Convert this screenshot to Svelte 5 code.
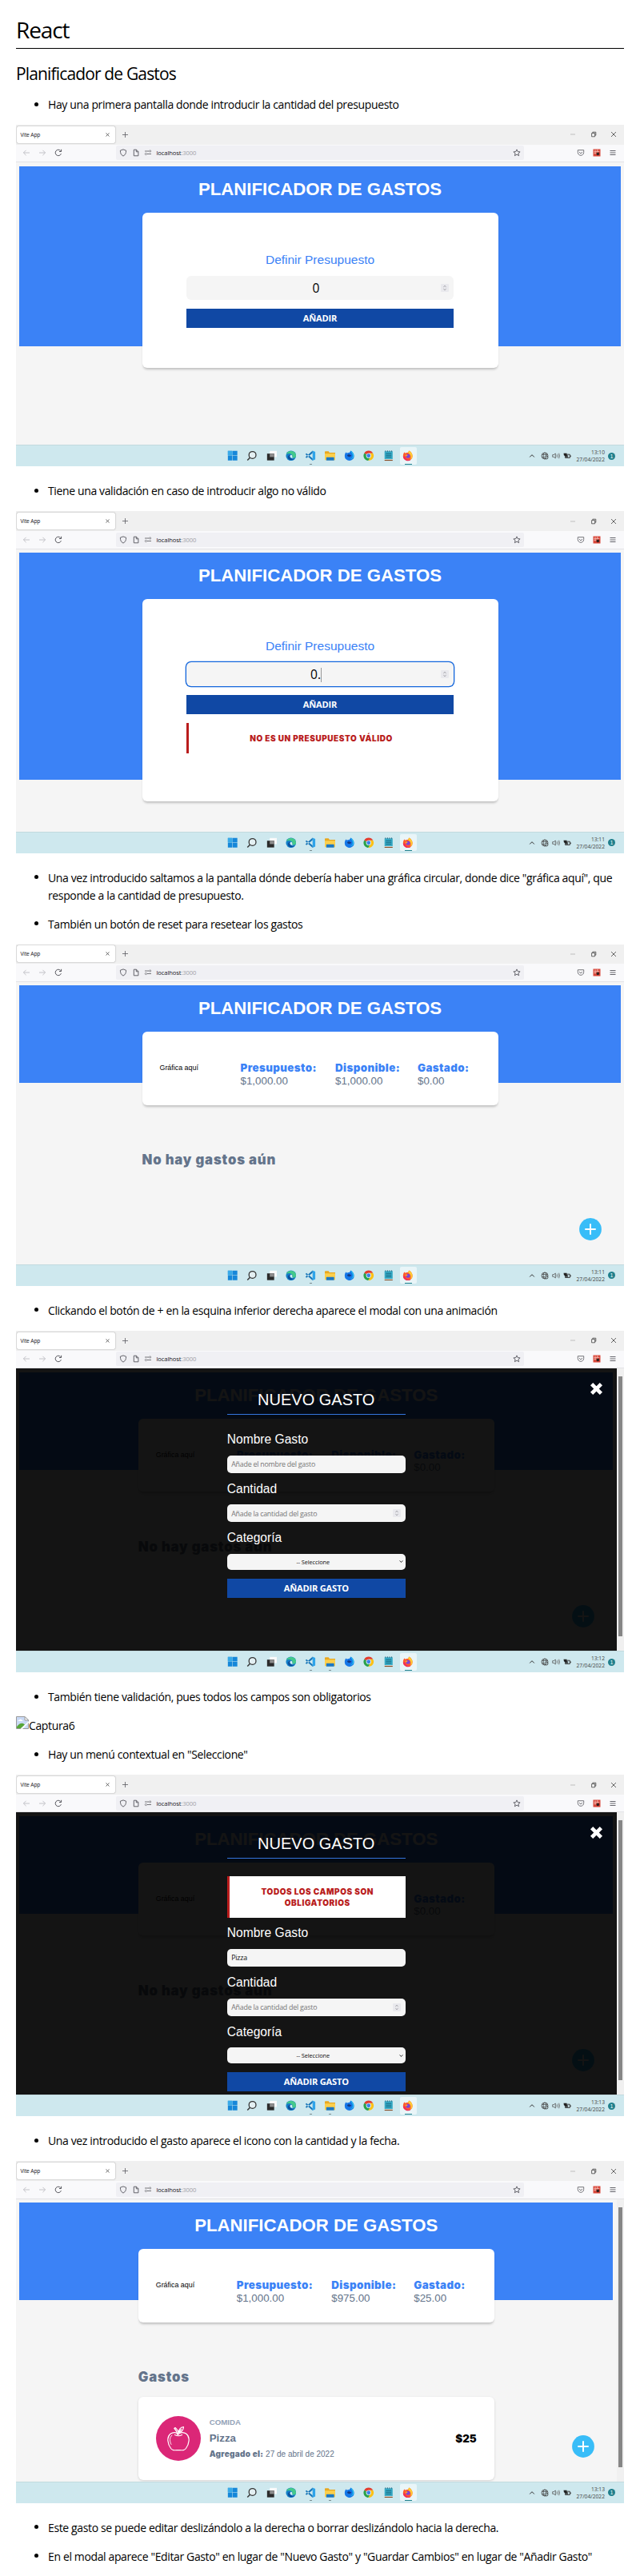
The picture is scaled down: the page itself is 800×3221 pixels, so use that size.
<script>
  const start = { kind: 'budget', time: '13:10', value: '0' };
  const invalid = { kind: 'budget', time: '13:11', value: '0.', focused: true, error: 'No es un presupuesto válido' };
  const empty = { kind: 'control', time: '13:11', available: '$1,000.00', spent: '$0.00' };
  const modal = { ...empty, time: '13:12', scroll: true, folder: true, modal: { name: '' } };
  const modalError = { ...empty, time: '13:13', scroll: true, folder: true, modal: { name: 'Pizza', error: 'Todos los campos son obligatorios' } };
  const list = { kind: 'control', time: '13:13', available: '$975.00', spent: '$25.00', scroll: true, folder: true, expense: true };

  const blocks = [
    { items: ['Hay una primera pantalla donde introducir la cantidad del presupuesto'], shot: start },
    { items: ['Tiene una validación en caso de introducir algo no válido'], shot: invalid },
    {
      items: [
        'Una vez introducido saltamos a la pantalla dónde debería haber una gráfica circular, donde dice "gráfica aquí", que responde a la cantidad de presupuesto.',
        'También un botón de reset para resetear los gastos'
      ],
      shot: empty
    },
    { items: ['Clickando el botón de + en la esquina inferior derecha aparece el modal con una animación'], shot: modal },
    { items: ['También tiene validación, pues todos los campos son obligatorios'], missing: 'Captura6' },
    { items: ['Hay un menú contextual en "Seleccione"'], shot: modalError },
    { items: ['Una vez introducido el gasto aparece el icono con la cantidad y la fecha.'], shot: list },
    {
      items: [
        'Este gasto se puede editar deslizándolo a la derecha o borrar deslizándolo hacia la derecha.',
        'En el modal aparece "Editar Gasto" en lugar de "Nuevo Gasto" y "Guardar Cambios" en lugar de "Añadir Gasto"'
      ]
    }
  ];
</script>

{#snippet stepper()}
  <svg class="stepper" viewBox="0 0 10 10"><rect width="10" height="10" rx="1" fill="#e9e9ed" /><path d="M3.4 3.8 5 2.3l1.6 1.5M3.4 6.2 5 7.7l1.6-1.5" fill="none" stroke="#8a8a92" stroke-width=".8" /></svg>
{/snippet}

{#snippet browserBars()}
  <div class="tabs">
    <div class="tab">
      <span>Vite App</span>
      <svg width="7" height="7" viewBox="0 0 7 7"><path d="M1.5 1.5l4 4M5.5 1.5l-4 4" stroke="#444" stroke-width=".8" /></svg>
    </div>
    <svg class="new" width="9" height="9" viewBox="0 0 9 9"><path d="M4.5 1v7M1 4.5h7" stroke="#5c5c62" stroke-width=".8" /></svg>
    <div class="window">
      <svg width="8" height="8" viewBox="0 0 8 8"><path d="M1 4h6" stroke="#ccc" stroke-width="1.4" /></svg>
      <svg width="8" height="8" viewBox="0 0 8 8"><path d="M1.6 2.6h4v4.2h-4zM2.8 2.4V1.2h4v4H5.8" fill="none" stroke="#444" stroke-width=".8" /></svg>
      <svg width="8" height="8" viewBox="0 0 8 8"><path d="M1 1l6 6M7 1L1 7" stroke="#444" stroke-width=".8" /></svg>
    </div>
  </div>
  <div class="tools">
    <div class="nav">
      <svg width="10" height="10" viewBox="0 0 10 10"><path d="M9 5H1.5M4.6 1.8 1.4 5l3.2 3.2" fill="none" stroke="#bcbcc2" stroke-width=".9" /></svg>
      <svg width="10" height="10" viewBox="0 0 10 10"><path d="M1 5h7.5M5.4 1.8 8.6 5 5.4 8.2" fill="none" stroke="#bcbcc2" stroke-width=".9" /></svg>
      <svg width="10" height="10" viewBox="0 0 10 10"><path d="M8.4 6.2A3.7 3.7 0 1 1 7.6 2.4M8.6.8v2.7H6" fill="none" stroke="#55555c" stroke-width="1" /></svg>
    </div>
    <div class="url">
      <svg width="10" height="10" viewBox="0 0 10 10"><path d="M5 .9 8.6 2.2c0 3.2-.7 5.4-3.6 6.9C2.1 7.6 1.4 5.4 1.4 2.2z" fill="none" stroke="#55555c" stroke-width=".9" /></svg>
      <svg width="10" height="10" viewBox="0 0 10 10"><path d="M2.3 1.2h3.2l2.4 2.4v5.2H2.3zM5.3 1.2v2.6h2.6" fill="none" stroke="#55555c" stroke-width=".9" /></svg>
      <svg width="10" height="10" viewBox="0 0 10 10"><path d="M1 3h5M4 6.5h5" stroke="#66666c" stroke-width=".9" /><circle cx="7.6" cy="3" r="1.1" fill="none" stroke="#66666c" stroke-width=".7" /><circle cx="2.4" cy="6.5" r="1.1" fill="none" stroke="#66666c" stroke-width=".7" /></svg>
      <span>localhost<i>:3000</i></span>
      <svg class="star" width="10" height="10" viewBox="0 0 10 10"><path d="M5 .9l1.2 2.7 2.9.3-2.2 1.9.7 2.9L5 7.2 2.4 8.7l.7-2.9L.9 3.9l2.9-.3z" fill="none" stroke="#55555c" stroke-width=".9" /></svg>
    </div>
    <div class="extras">
      <svg width="10" height="10" viewBox="0 0 10 10"><path d="M1.3 1.7h7.4v2.6C8.7 6.7 7 8.3 5 8.3S1.3 6.7 1.3 4.3zM3 4l2 2 2-2" fill="none" stroke="#66666c" stroke-width=".9" /></svg>
      <svg width="10" height="10" viewBox="0 0 10 10"><rect x=".5" y=".5" width="9" height="9" fill="#d8473a" /><path d="M1.5 3.4h6.8M1.5 5.4h3M3 1.4v5M5.8 1v4" stroke="#f3b5ad" stroke-width=".9" /><circle cx="6.3" cy="6.4" r="1.8" fill="#33201e" /></svg>
      <svg width="10" height="10" viewBox="0 0 10 10"><path d="M1.5 2.5h7M1.5 5h7M1.5 7.5h7" stroke="#55555c" stroke-width=".9" /></svg>
    </div>
  </div>
{/snippet}

{#snippet taskbar(shot)}
  <div class="taskbar">
    <div class="apps">
      <div class="app"><svg viewBox="0 0 16 16"><path d="M1 1h6.7v6.7H1zM8.3 1H15v6.7H8.3zM1 8.3h6.7V15H1zM8.3 8.3H15V15H8.3z" fill="#1687d9" /><path d="M1 1h6.7v6.7H1z" fill="#38a9e8" /></svg></div>
      <div class="app"><svg viewBox="0 0 16 16"><circle cx="9" cy="7" r="5.2" fill="#e3eff2" stroke="#333" stroke-width="1.5" /><path d="M5.3 11 1.5 14.8" stroke="#333" stroke-width="1.7" /></svg></div>
      <div class="app"><svg viewBox="0 0 16 16"><path d="M5 1h11v9H5z" fill="#fafafa" /><path d="M1 5h10.5v10H1z" fill="#2b2b2b" /><path d="M5 5h6.5v5H5z" fill="#8d8d8d" /></svg></div>
      <div class="app"><svg viewBox="0 0 16 16"><circle cx="8" cy="8" r="7.5" fill="#157fc9" /><path d="M1 6A7.5 7.5 0 0 1 15.5 8c0 3-2.5 3.6-4.7 3.2-1.5-.3-.6-1.2-.6-2.7C10 5.500 5 3.500 1 6z" fill="#45c98b" /><path d="M6 8.500c0 3.200 3.500 5 7 4C9 16.500 2 14 3.500 9 4 7.500 6 6.500 7.500 6.800 6.500 7.300 6 7.800 6 8.500z" fill="#0e4f9c" /><path d="M8 6.800c1.500.3 2.500 1.500 1.800 3.200-.4 1 .6 1.800 2.400 1.700-2.200.9-5.500-.2-5.600-2.700 0-1 .5-1.800 1.400-2.200z" fill="#d6eff3" /></svg></div>
      <div class="app"><svg viewBox="0 0 16 16"><path d="M11.500.5 15.500 2.500v11l-4 2z" fill="#2fa4ea" /><path d="M11.500 4 2.500 11.500 1 10.200 11.500.5zM11.500 12 2.500 4.500 1 5.800l10.500 9.700z" fill="#1674b8" /></svg><b class="dot"></b></div>
      <div class="app"><svg viewBox="0 0 16 16"><path d="M0 2.500Q0 1.500 1 1.500h4.500l1.500 2h8q1 0 1 1V14H0z" fill="#e9a820" /><path d="M0 5h16v9.500H0z" fill="#fccf4b" /><path d="M3 10.500h10q.8 0 .8.8V15H2.200v-3.700q0-.8.8-.8z" fill="#1c78c4" /></svg>{#if shot.folder}<b class="dot"></b>{/if}</div>
      <div class="app"><svg viewBox="0 0 16 16"><path d="M8 15.500A7 7 0 0 1 1 8.500C1 6 2 4 3 3l1.500 1.500C6 3.500 7 3.500 8 3.500L10 .5c3 2 5 4.500 5 8a7 7 0 0 1-7 7z" fill="#1577e8" /><path d="M10 .5c.5 3 3 4 3 7.500 0 3-2 5-5 5 6.500 1.500 9.500-7 2-12.500z" fill="#28c7ed" /><path d="M4.500 7.500 7 6l4 1.500a3.500 3.500 0 0 1-6.500 0z" fill="#113a86" /></svg></div>
      <div class="app"><svg viewBox="0 0 16 16"><path d="M8 8 1.500 4.300A7.500 7.500 0 0 1 14.500 4.300H8z" fill="#e33b2e" /><path d="M8 4.300h6.500A7.500 7.500 0 0 1 7.300 15.500L11 9.700 8 8z" fill="#fbc116" /><path d="M8 8 1.500 4.300A7.500 7.500 0 0 0 7.300 15.500L11 9.700z" fill="#2aa14b" /><circle cx="8" cy="8" r="3.700" fill="#fff" /><circle cx="8" cy="8" r="2.900" fill="#3d7fe8" /></svg></div>
      <div class="app"><svg viewBox="0 0 16 16"><path d="M2 1.500h12V13H2z" fill="#35aac6" /><path d="M4 5h8M4 7.500h8M4 10h8" stroke="#17627b" stroke-width="1" /><path d="M3.500.3v2M6.500.3v2M9.500.3v2M12.500.3v2" stroke="#25637a" stroke-width="1" /><path d="M2 13h12v.7H2z" fill="#fff" /><path d="M2 14h12v1.500H2z" fill="#8a4b22" /></svg></div>
      <div class="app active"><svg viewBox="0 0 16 16"><path d="M8 15.500A7 7 0 0 1 1 8.500C1 6 2 4 3 3l1.500 1.500C6 3.500 7 3.500 8 3.500L10 .5c3 2 5 4.500 5 8a7 7 0 0 1-7 7z" fill="#ff5a2d" /><path d="M10 .5c3 2 5 4.500 5 8a7 7 0 0 1-3 5.500C13.500 9 12 6 8 3.500z" fill="#ffc935" /><path d="M1 8.500a7 7 0 0 0 12 5c-4 1.500-8 .5-9-4z" fill="#f02c58" /><circle cx="8.300" cy="8.500" r="3" fill="#7a45d6" /><path d="M4 7c2-1 3 0 4 .5-1.500 1-2 1-2.500 2z" fill="#ffa22d" /></svg><b class="line"></b></div>
    </div>
    <div class="tray">
      <svg width="8" height="8" viewBox="0 0 8 8"><path d="M1.200 5.500 4 2.700l2.800 2.800" fill="none" stroke="#333" stroke-width="1" /></svg>
      <svg width="10" height="10" viewBox="0 0 10 10"><circle cx="5" cy="5" r="4" fill="none" stroke="#444" stroke-width=".8" /><ellipse cx="5" cy="5" rx="1.800" ry="4" fill="none" stroke="#444" stroke-width=".7" /><path d="M1.300 3.500h7.400M1.300 6.500h3" stroke="#444" stroke-width=".7" /><circle cx="7" cy="7" r="2" fill="#cee8ee" stroke="#333" stroke-width=".8" /><path d="M5.600 8.400 8.400 5.600" stroke="#333" stroke-width=".7" /></svg>
      <svg width="10" height="10" viewBox="0 0 10 10"><path d="M.7 3.700h1.500L4.300 2v6L2.200 6.300H.7z" fill="none" stroke="#555" stroke-width=".8" /><path d="M5.800 3.500q1 1.500 0 3M7.300 2.500q1.700 2.500 0 5M8.700 1.700q2 3.300 0 6.600" fill="none" stroke="#666" stroke-width=".7" /></svg>
      <svg width="10" height="10" viewBox="0 0 10 10"><path d="M2.500 3.200h5.800v4.300H2.500z" fill="#bcd4da" stroke="#333" stroke-width=".9" /><path d="M9.300 4.500v1.700" stroke="#333" /><path d="M.5 1.800h4v2.500L3 6 .9 4.300zM3.500 4.300h2.200v2.400H3.500z" fill="#222" /></svg>
      <div class="clock"><span>{shot.time}</span><span>27/04/2022</span></div>
      <div class="badge">1</div>
    </div>
  </div>
{/snippet}

{#snippet page(shot)}
  <div class="page">
    <header>
      <h3>Planificador de Gastos</h3>
      {#if shot.kind === 'budget'}
        <div class="card budget">
          <div class="label">Definir Presupuesto</div>
          <div class="amount" class:focused={shot.focused}><span>{shot.value}</span>{@render stepper()}</div>
          <div class="submit">Añadir</div>
          {#if shot.error}<div class="alert">{shot.error}</div>{/if}
        </div>
      {:else}
        <div class="card control">
          <div class="chart">Gráfica aquí</div>
          <div><b>Presupuesto:</b>$1,000.00</div>
          <div><b>Disponible:</b>{shot.available}</div>
          <div><b>Gastado:</b>{shot.spent}</div>
        </div>
      {/if}
    </header>
    {#if shot.kind === 'control'}
      <main>
        <h4>{shot.expense ? 'Gastos' : 'No hay gastos aún'}</h4>
        {#if shot.expense}
          <div class="expense">
            <div class="icon">
              <svg width="30" height="32" viewBox="0 0 30 32" fill="none" stroke="#fff" stroke-width="1.2" stroke-linecap="round" stroke-linejoin="round"><path d="M15 10.200C12.500 8.300 8 7.900 5 10.300 0 14.500 1.500 23 5.600 28.500c2.400 3 4.500 2.300 9.400 2 4.900.3 7 1 9.400-2C28.500 23 30 14.500 25 10.300c-3-2.400-7.500-2-10-.1z" /><path d="M15 11.500C15.300 8.500 14 5 11 2.500L9.800 3.500C12 5.500 13.500 8 13.600 11.200M10.500 11.500q4.500 2.500 9 0M15.200 8.500C15.500 4 18.500 2 21.500 1.500 21.500 5.500 18.500 8.500 15.200 8.500zM15.200 8.500l3.300-4" /><path d="M7 12c-3.500 3-3 7.500-1 11.500" stroke-width=".9" /></svg>
            </div>
            <div class="detail">
              <div class="category">Comida</div>
              <div class="name">Pizza</div>
              <div class="date"><b>Agregado el:</b> 27 de abril de 2022</div>
            </div>
            <div class="total">$25</div>
          </div>
        {/if}
      </main>
      <svg class="plus" viewBox="0 0 28 28"><circle cx="14" cy="14" r="13.900" fill="#38bdf8" /><path d="M14 8v12M8 14h12" stroke="#fff" stroke-width="2" stroke-linecap="round" /></svg>
    {/if}
  </div>
{/snippet}

{#snippet screen(shot)}
  <div class="shot">
    {@render browserBars()}
    <div class="viewport">
      <div class="frame">
        {@render page(shot)}
        {#if shot.modal}
          <div class="modal">
            <svg class="close" viewBox="0 0 17 17"><path d="M2.600 2.600l11.800 11.800M14.400 2.600 2.600 14.400" stroke="#fff" stroke-width="4.600" /></svg>
            <div class="form">
              <div class="legend">Nuevo Gasto</div>
              {#if shot.modal.error}<div class="alert">{shot.modal.error}</div>{/if}
              <div class="label">Nombre Gasto</div>
              <div class="field">{#if shot.modal.name}<span class="typed">{shot.modal.name}</span>{:else}<span>Añade el nombre del gasto</span>{/if}</div>
              <div class="label">Cantidad</div>
              <div class="field"><span>Añade la cantidad del gasto</span>{@render stepper()}</div>
              <div class="label">Categoría</div>
              <div class="field select"><em>-- Seleccione</em><svg width="5" height="5" viewBox="0 0 5 5"><path d="M.6 1.400 2.500 3.500 4.400 1.400" fill="none" stroke="#222" stroke-width=".9" /></svg></div>
              <div class="submit">Añadir Gasto</div>
            </div>
          </div>
        {/if}
      </div>
      {#if shot.scroll}<div class="scrollbar"><div></div></div>{/if}
    </div>
    {@render taskbar(shot)}
  </div>
{/snippet}

<article>
  <h1>React</h1>
  <h2>Planificador de Gastos</h2>
  {#each blocks as block}
    <ul>
      {#each block.items as item}<li>{item}</li>{/each}
    </ul>
    {#if block.shot}{@render screen(block.shot)}{/if}
    {#if block.missing}
      <p class="missing">
        <svg width="16" height="16" viewBox="0 0 16 16"><path d="M.5.5h10.500l4.500 4.500v10.500H.5z" fill="#c9d9f5" stroke="#9a9a9a" /><path d="M11 .5v4.500h4.500z" fill="#fff" stroke="#9a9a9a" /><path d="M2.500 6q0-1.500 1.800-1.500Q5.500 3 7 4.500q1.500 0 1.500 1.500z" fill="#fff" /><path d="M1 13Q5 7.500 9 9l2 1.500L6 15H1z" fill="#57a639" /><path d="M5.500 16 16 6v2L8 16z" fill="#fff" /></svg><span>{block.missing}</span>
      </p>
    {/if}
  {/each}
</article>

<style>
  :global(body) { background: #fff; }
  article { box-sizing: border-box; width: 800px; height: 3221px; padding: 18px 20px 0; overflow: hidden; color: #000; font: 14px/22px "Open Sans", "Noto Sans", sans-serif; letter-spacing: -.37px; }
  h1, h2, h3, h4, p, ul { margin: 0; padding: 0; font-weight: 400; }
  h1 { height: 42px; border-bottom: 1px solid #000; font-size: 28px; line-height: 38px; letter-spacing: -1.1px; }
  h2 { margin: 18px 0 14px; font-size: 21px; line-height: 27px; letter-spacing: -.85px; }
  ul { padding-left: 40px; list-style: none; }
  li { position: relative; margin-bottom: 14px; }
  li::before { content: ""; position: absolute; left: -17px; top: 7.500px; width: 5px; height: 5px; border-radius: 50%; background: #000; }
  .missing { display: flex; height: 22px; margin-bottom: 14px; }
  .missing svg { display: block; margin-top: -1px; }

  .shot { display: flex; flex-direction: column; height: 427.300px; margin-bottom: 20px; font-family: "Liberation Sans", Arial, sans-serif; letter-spacing: 0; line-height: normal; overflow: hidden; }
  .shot svg { display: block; flex: none; }
  .tabs { display: flex; flex: none; align-items: center; height: 24.700px; background: #f0f0f0; }
  .tab { display: flex; align-items: center; justify-content: space-between; box-sizing: border-box; width: 123px; height: 21px; margin-left: 1px; padding: 0 6px 0 4.500px; border-radius: 2px; background: #fff; box-shadow: 0 0 1.500px #777; font: 6.700px "Open Sans", sans-serif; letter-spacing: -.15px; color: #15141a; }
  .new { margin-left: 7.500px; }
  .window { display: flex; gap: 17.500px; margin-left: auto; padding-right: 9px; }
  .tools { display: flex; flex: none; align-items: center; box-sizing: border-box; height: 22.600px; border-bottom: 1px solid #e3e3e6; background: #f9f9fb; }
  .nav { display: flex; gap: 10px; width: 117px; padding-left: 8px; }
  .url { display: flex; align-items: center; gap: 5.500px; box-sizing: border-box; width: 510px; height: 18px; padding: 0 4px; border-radius: 2px; background: #f0f0f4; font: 7.600px "Open Sans", sans-serif; letter-spacing: -.1px; color: #15141a; }
  .url i { font-style: normal; color: #a0a0a6; }
  .star { margin-left: auto; }
  .extras { display: flex; gap: 10px; margin-left: auto; padding-right: 9px; }

  .viewport { display: flex; flex: 1; min-height: 0; overflow: hidden; background: #f5f5f5; }
  .frame { position: relative; flex: 1; min-width: 0; overflow: hidden; }
  .page { padding: 4.400px; }
  header { display: flex; flex-direction: column; align-items: center; padding-top: 16px; background: #3b82f6; }
  h3 { margin-bottom: 16px; color: #fff; font-size: 22.200px; line-height: 26px; font-weight: 700; text-transform: uppercase; }
  .card { box-sizing: border-box; width: 445px; margin-bottom: -27.500px; border-radius: 6px; background: #fff; box-shadow: 0 3px 3px -1px rgba(0, 0, 0, .22); }
  .budget { display: flex; flex-direction: column; gap: 11px; padding: 50.500px 55.500px 50px; text-align: center; }
  .budget .label { font-size: 15.500px; line-height: 18px; color: #3b82f6; }
  .amount { display: flex; align-items: center; justify-content: center; height: 30px; padding: 0 6px 0 0; border-radius: 6px; background: #f5f5f5; font: 15.600px "Open Sans", sans-serif; }
  .amount span { flex: 1; padding-left: 6px; }
  .amount.focused { box-shadow: 0 0 0 1.300px #1265dc; }
  .focused span::after { content: ""; display: inline-block; width: 1px; height: 18px; vertical-align: -4px; background: #999; }
  .stepper { width: 10px; height: 10px; margin-left: auto; }
  .submit { height: 24px; background: #1048a4; color: #fff; font: 700 11.100px/24px "Open Sans", sans-serif; letter-spacing: -.2px; text-align: center; text-transform: uppercase; }
  .alert { box-sizing: border-box; padding: 11.500px 11px; border-left: 3px solid #b91c1c; background: #fff; color: #b91c1c; font: 900 10px/14.600px Inter, sans-serif; letter-spacing: .55px; text-align: center; text-transform: uppercase; }
  .budget .alert { margin-bottom: 10px; }
  .control { display: grid; grid-template-columns: 101px 118.500px 103px 1fr; height: 91.500px; padding: 37px 0 0 22px; color: #64748b; font-size: 13.350px; line-height: 16.600px; }
  .control b { display: block; color: #3b82f6; font-family: Inter, sans-serif; font-weight: 900; letter-spacing: .4px; }
  .control .chart { color: #000; font-size: 8.900px; }
  main { width: 445px; margin: 0 auto; padding-top: 86px; }
  h4 { color: #64748b; font: 900 16.700px/20px Inter, sans-serif; letter-spacing: .85px; }
  .expense { display: flex; align-items: center; box-sizing: border-box; height: 103.500px; margin-top: 15px; padding: 0 22px; border-radius: 6px; background: #fff; box-shadow: 0 1px 3px rgba(0, 0, 0, .15); }
  .icon { display: flex; align-items: center; justify-content: center; width: 56px; height: 56px; margin-right: 11px; border-radius: 50%; background: #db2777; }
  .detail { display: grid; gap: 5px; color: #64748b; line-height: 15px; font-size: 10px; }
  .category { color: #94a3b8; font-weight: 700; font-size: 9.700px; text-transform: uppercase; }
  .name { font-size: 13.300px; font-weight: 700; }
  .date b { font-family: Inter, sans-serif; font-weight: 900; letter-spacing: .3px; }
  .total { margin-left: auto; color: #000; font: 900 13.350px Inter, sans-serif; }
  .plus { position: absolute; right: 28px; bottom: 29.500px; width: 28px; height: 28px; }
  .scrollbar { box-sizing: border-box; width: 9.500px; flex: none; padding: 10px 2px 0 2.500px; background: #f0f0f0; }
  .scrollbar div { height: 325px; background: #868686; }

  .modal { position: absolute; inset: 0; background: rgba(0, 0, 0, .92); color: #fff; }
  .close { position: absolute; right: 16.500px; top: 17px; width: 17px; height: 17px; }
  .form { width: 223px; margin: 0 auto; padding-top: 28px; }
  .legend { height: 28.500px; margin-bottom: 22.200px; border-bottom: 1.500px solid #3474dd; font-size: 20px; line-height: 23px; text-align: center; text-transform: uppercase; }
  .form .alert { margin-bottom: 10px; height: 52px; }
  .form .label { margin-bottom: 10.700px; font-size: 15.600px; line-height: 18px; }
  .field { display: flex; align-items: center; box-sizing: border-box; height: 22px; margin-bottom: 11px; padding: 0 6px 0 5.500px; border-radius: 5px; background: #f5f5f5; color: #757575; font: 8.900px "Open Sans", sans-serif; letter-spacing: -.25px; }
  .field .typed { color: #111; }
  .select { height: 20px; padding: 0 3px 0 0; color: #111; font-size: 7.400px; letter-spacing: -.1px; }
  .select em { flex: 1; font-style: normal; text-align: center; }

  .taskbar { position: relative; display: flex; flex: none; align-items: center; justify-content: flex-end; box-sizing: border-box; height: 27px; border-top: 1px solid #c2dade; background: #cee8ee; }
  .apps { position: absolute; left: 260px; top: 2px; display: flex; gap: 3.400px; }
  .app { position: relative; display: flex; align-items: center; justify-content: center; width: 21px; height: 21.500px; border-radius: 2px; }
  .app svg { width: 13.500px; height: 13.500px; }
  .active { background: #e9f5f8; }
  .dot, .line { position: absolute; left: 9px; bottom: 0; width: 3px; height: 1px; background: #7c8c90; }
  .line { left: 6px; width: 9px; background: #23838f; }
  .tray { display: flex; align-items: center; gap: 4px; padding-right: 11px; }
  .tray svg:first-child { margin-right: 3px; }
  .clock { display: flex; flex-direction: column; align-items: flex-end; width: 40px; margin-left: -1.500px; font: 6.700px/9px "Open Sans", sans-serif; color: #444; }
  .badge { width: 9px; height: 9px; border-radius: 50%; background: #1f7f8c; color: #fff; font-size: 6.500px; line-height: 9px; text-align: center; }
</style>
